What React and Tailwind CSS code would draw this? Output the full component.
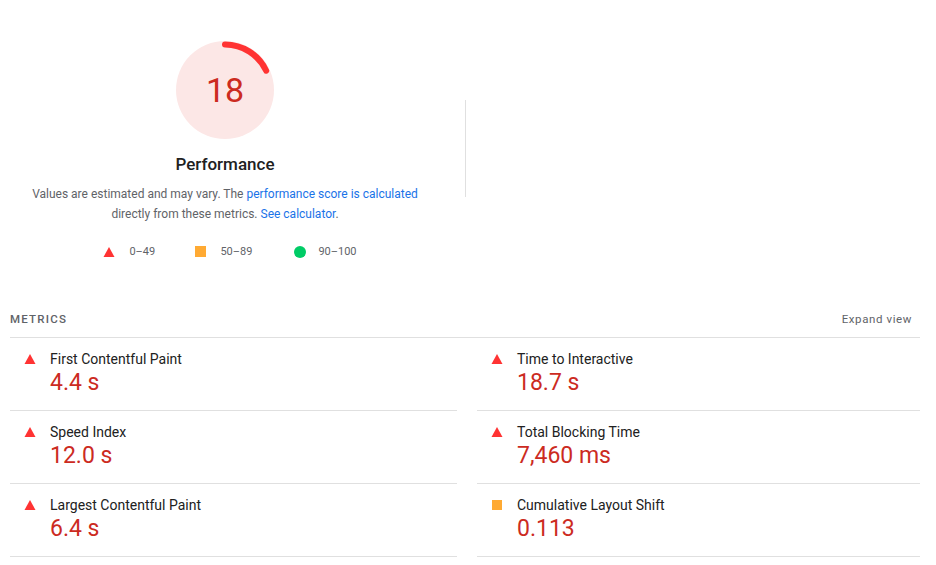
const Tri = () => (
  <svg width="12" height="12" viewBox="0 0 12 12" className="shrink-0 mt-[3px]"><polygon points="6,1 11.5,11 0.5,11" fill="#f33" /></svg>
);
const Sq = () => <div className="w-[10px] h-[10px] bg-[#fa3] shrink-0 mt-[4px] mx-[1px]" />;

function Metric({ label, value, icon, color }) {
  return (
    <div className="flex border-b border-[#e0e0e0] h-[73px] pl-[14px] pt-[12px]">
      <div className="w-[26px]">{icon}</div>
      <div>
        <div className="text-[14px] text-[#212121] leading-[18px]">{label}</div>
        <div className="text-[23px] leading-[30px]" style={{ color }}>{value}</div>
      </div>
    </div>
  );
}

export default function App() {
  const r = 45.5, c = 2 * Math.PI * r;
  return (
    <div className="w-[936px] h-[565px] bg-white overflow-hidden" style={{ fontFamily: "Roboto, sans-serif" }}>
      <div className="flex h-[300px]">
        <div className="w-[450px] flex flex-col items-center pt-[41px]">
          <div className="relative w-[98px] h-[98px]">
            <svg width="98" height="98" viewBox="0 0 98 98">
              <circle cx="49" cy="49" r="49" fill="#fce7e6" />
              <circle cx="49" cy="49" r={r} fill="none" stroke="#f33" strokeWidth="6" strokeLinecap="round"
                strokeDasharray={`${c * 0.18} ${c}`} transform="rotate(-90 49 49)" />
            </svg>
            <div className="absolute inset-0 flex items-center justify-center text-[34px]" style={{ color: "#cc2b1f" }}>18</div>
          </div>
          <div className="text-[17px] font-medium text-[#212121] mt-[13px]">Performance</div>
          <div className="text-[12px] text-[#5f6368] text-center leading-[20px] mt-[6px]">
            Values are estimated and may vary. The <span className="text-[#1a73e8]">performance score is calculated</span><br />
            directly from these metrics. <span className="text-[#1a73e8]">See calculator</span>.
          </div>
          <div className="flex items-center text-[11px] text-[#5f6368] mt-[20px] ml-[10px]">
            <div className="flex items-center gap-[14px] w-[92px]"><svg width="12" height="12" viewBox="0 0 12 12"><polygon points="6,1 11.5,11 0.5,11" fill="#f33" /></svg>0–49</div>
            <div className="flex items-center gap-[14px] w-[99px]"><div className="w-[11px] h-[11px] bg-[#fa3]" />50–89</div>
            <div className="flex items-center gap-[12px]"><div className="w-[12px] h-[12px] rounded-full bg-[#0c6]" />90–100</div>
          </div>
        </div>
        <div className="w-px bg-[#e0e0e0] h-[97px] mt-[100px] ml-[15px]" />
      </div>
      <div className="pl-[10px] w-[920px] pt-[11px]">
        <div className="flex justify-between items-center h-[18px] border-b border-[#e0e0e0] pb-[8px] box-content">
          <div className="text-[11.5px] tracking-[1.2px] text-[#5f6368] font-medium">METRICS</div>
          <div className="text-[11.5px] tracking-[0.6px] text-[#5f6368] mr-[8px]">Expand view</div>
        </div>
        <div className="flex gap-[20px]">
          <div className="w-[447px]">
            <Metric label="First Contentful Paint" value="4.4 s" icon={<Tri />} color="#cc2b1f" />
            <Metric label="Speed Index" value="12.0 s" icon={<Tri />} color="#cc2b1f" />
            <Metric label="Largest Contentful Paint" value="6.4 s" icon={<Tri />} color="#cc2b1f" />
          </div>
          <div className="w-[443px]">
            <Metric label="Time to Interactive" value="18.7 s" icon={<Tri />} color="#cc2b1f" />
            <Metric label="Total Blocking Time" value="7,460 ms" icon={<Tri />} color="#cc2b1f" />
            <Metric label="Cumulative Layout Shift" value="0.113" icon={<Sq />} color="#cc2b1f" />
          </div>
        </div>
      </div>
    </div>
  );
}
